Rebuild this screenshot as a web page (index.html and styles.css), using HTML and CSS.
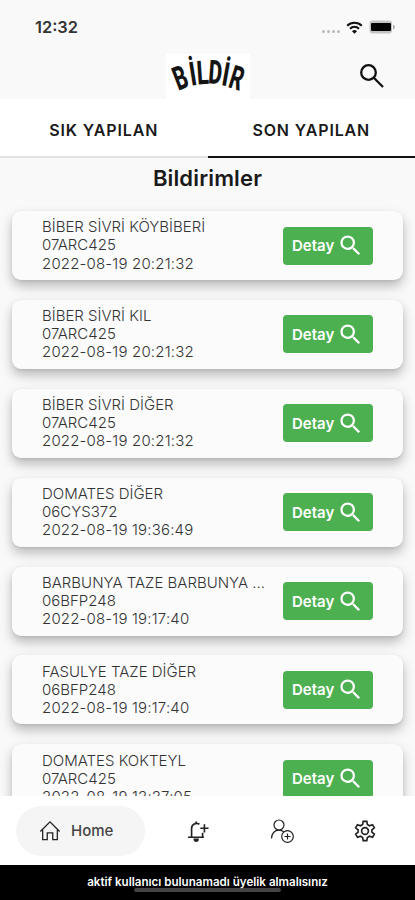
FILE: index.html
```html
<!DOCTYPE html>
<html lang="tr">
<head>
    <meta charset="UTF-8">
    <title>Bildir</title>
    <meta name="viewport" content="width=device-width, initial-scale=1.0">
    <link rel="stylesheet" href="styles.css">
</head>
<body>

<svg width="0" height="0" class="symbols">
    <symbol id="search" viewBox="0 0 24 24">
        <path d="M15.5 14h-.79l-.28-.27A6.47 6.47 0 0 0 16 9.5 6.5 6.5 0 1 0 9.5 16c1.61 0 3.09-.59 4.23-1.57l.27.28v.79l5 4.99L20.49 19l-4.99-5zm-6 0A4.5 4.5 0 1 1 14 9.5 4.5 4.5 0 0 1 9.5 14z"/>
    </symbol>
</svg>

<header class="app-header">
    <div class="status-bar">
        <span class="clock">12:32</span>
        <div class="status-icons">
            <span class="dots"><i></i><i></i><i></i><i></i></span>
            <svg class="wifi" viewBox="0 0 17 13">
                <path d="M1.2 4.7a10.4 10.4 0 0 1 14.6 0M4 7.7a6.4 6.4 0 0 1 9 0" fill="none" stroke="#111" stroke-width="2"/>
                <path d="M8.5 12.7L6 10.2a3.5 3.5 0 0 1 5 0z" fill="#111"/>
            </svg>
            <svg class="battery" viewBox="0 0 27 14">
                <rect x=".5" y=".5" width="22.5" height="13" rx="3" fill="#c4c4c4"/>
                <rect x="2" y="3" width="20" height="8" rx="1" fill="#000"/>
                <path d="M24 4.5c2.5 1 2.5 4 0 5z" fill="#aaa"/>
            </svg>
        </div>
    </div>
    <div class="title-bar">
        <svg class="logo" viewBox="0 0 84 45">
            <g class="logo-letters">
                <text transform="translate(18.5 34.5) rotate(-21) scale(.62 1)">B</text>
                <text transform="translate(28.5 31.3) rotate(-9) scale(.68 1)">İ</text>
                <text transform="translate(37.5 30) rotate(-4) scale(.66 1)">L</text>
                <text transform="translate(48.5 29.8) rotate(4) scale(.64 1)">D</text>
                <text transform="translate(58 31.6) rotate(10) scale(.68 1)">İ</text>
                <text transform="translate(67.5 35) rotate(17) scale(.62 1)">R</text>
            </g>
        </svg>
        <svg class="header-search" viewBox="0 0 24 24"><circle cx="8.5" cy="8.500" r="7.300"/><path d="M13.800 13.800L23 23"/></svg>
    </div>
</header>

<nav class="tabs">
    <a class="tab">SIK YAPILAN</a>
    <a class="tab active">SON YAPILAN</a>
</nav>

<main class="content">
    <h2>Bildirimler</h2>
    <div class="card">
        <div class="info">
            <p>BİBER SİVRİ KÖYBİBERİ</p>
            <p>07ARC425</p>
            <p class="date">2022-08-19 20:21:32</p>
        </div>
        <button class="detail-btn">Detay <svg><use href="#search"/></svg></button>
    </div>
    <div class="card">
        <div class="info">
            <p>BİBER SİVRİ KIL</p>
            <p>07ARC425</p>
            <p class="date">2022-08-19 20:21:32</p>
        </div>
        <button class="detail-btn">Detay <svg><use href="#search"/></svg></button>
    </div>
    <div class="card">
        <div class="info">
            <p>BİBER SİVRİ DİĞER</p>
            <p>07ARC425</p>
            <p class="date">2022-08-19 20:21:32</p>
        </div>
        <button class="detail-btn">Detay <svg><use href="#search"/></svg></button>
    </div>
    <div class="card">
        <div class="info">
            <p>DOMATES DİĞER</p>
            <p>06CYS372</p>
            <p class="date">2022-08-19 19:36:49</p>
        </div>
        <button class="detail-btn">Detay <svg><use href="#search"/></svg></button>
    </div>
    <div class="card">
        <div class="info">
            <p>BARBUNYA TAZE BARBUNYA ...</p>
            <p>06BFP248</p>
            <p class="date">2022-08-19 19:17:40</p>
        </div>
        <button class="detail-btn">Detay <svg><use href="#search"/></svg></button>
    </div>
    <div class="card">
        <div class="info">
            <p>FASULYE TAZE DİĞER</p>
            <p>06BFP248</p>
            <p class="date">2022-08-19 19:17:40</p>
        </div>
        <button class="detail-btn">Detay <svg><use href="#search"/></svg></button>
    </div>
    <div class="card">
        <div class="info">
            <p>DOMATES KOKTEYL</p>
            <p>07ARC425</p>
            <p class="date">2022-08-19 13:37:05</p>
        </div>
        <button class="detail-btn">Detay <svg><use href="#search"/></svg></button>
    </div>
</main>

<nav class="bottom-nav">
    <a class="nav-item home">
        <svg viewBox="0 0 24 24"><path d="M1.500 12.500L12 2l10.500 10.500M4 10.500V21.500h5V14h6v7.500h5V10.500"/></svg>
        <span>Home</span>
    </a>
    <div class="nav-icons">
        <a class="nav-item">
            <svg viewBox="0 0 24 24"><path d="M13.500 4.600A5.500 5.500 0 0 0 5 9.200v9M17 14v4.200M1 18.800h17.500M10 1.500v2.500M14.500 9h9M19 4.500v9"/><path d="M8 21h4a2 2 0 0 1-4 0z" fill="#222"/></svg>
        </a>
        <a class="nav-item">
            <svg viewBox="0 0 24 24" class="thin"><circle cx="9" cy="6" r="5"/><path d="M1.500 19.500c0-5 3-8.300 7.500-8.300 2 0 3.500.6 4.800 1.700M14.500 17.500h6M17.500 14.500v6"/><circle cx="17.500" cy="17.500" r="5.800"/></svg>
        </a>
        <a class="nav-item">
            <svg viewBox="0 0 24 24"><path d="M10 1.500h4l.6 3.500 2.300 1.300 3.300-1.200 2 3.500-2.700 2.200v2.400l2.700 2.200-2 3.500-3.300-1.200-2.300 1.300-.6 3.500h-4l-.6-3.500-2.300-1.300-3.300 1.200-2-3.500 2.700-2.200v-2.400L1.800 8.600l2-3.500 3.300 1.200L9.400 5z"/><circle cx="12" cy="12" r="3.700"/></svg>
        </a>
    </div>
</nav>

<footer class="notice">
    <p>aktif kullanıcı bulunamadı üyelik almalısınız</p>
    <div class="home-indicator"></div>
</footer>

</body>
</html>
```
FILE: styles.css
```css
* {
    box-sizing: border-box;
}

body {
    margin: 0;
    height: 900px;
    display: flex;
    flex-direction: column;
    overflow: hidden;
    font-family: Inter, "Liberation Sans", sans-serif;
    background: #f9f9f9;
    color: #1a1a1a;
}

p {
    margin: 0;
}

.symbols {
    position: absolute;
}

.app-header {
    height: 99px;
    flex: none;
    background: #f9f9f9;
}

.status-bar {
    height: 54px;
    padding: 0 19px 0 35px;
    display: flex;
    justify-content: space-between;
    align-items: center;
}

.clock {
    font-size: 16.4px;
    font-weight: 600;
    color: #333;
}

.status-icons {
    display: flex;
    align-items: center;
}

.dots {
    display: flex;
    gap: 2px;
    margin: 8px 6px 0 0;
}

.dots i {
    width: 3px;
    height: 3px;
    border-radius: 50%;
    background: #bbb;
}

.wifi {
    width: 17px;
    height: 13px;
    margin-right: 6px;
}

.battery {
    width: 27px;
    height: 14px;
}

.title-bar {
    height: 45px;
    padding: 0 31px 0 166px;
    display: flex;
    justify-content: space-between;
    align-items: center;
}

.logo {
    width: 84px;
    height: 45px;
    background: #fff;
    overflow: visible;
}

.logo-letters {
    font-family: Roboto, sans-serif;
    font-size: 33px;
    font-weight: 800;
    text-anchor: middle;
    fill: #151515;
}

.header-search {
    width: 24px;
    height: 24px;
    margin-top: -2px;
    fill: none;
    stroke: #111;
    stroke-width: 2.3;
}

.tabs {
    display: flex;
    height: 59px;
    flex: none;
    background: #fff;
}

.tab {
    flex: 1;
    display: flex;
    justify-content: center;
    align-items: center;
    padding-top: 5px;
    font-size: 16px;
    font-weight: 600;
    letter-spacing: 0.85px;
    border-bottom: 2px solid #e2e2e2;
}

.tab.active {
    border-bottom-color: #111;
}

.content {
    flex: 1;
    min-height: 0;
    overflow: hidden;
    padding: 0 12px;
}

h2 {
    margin: 0 0 12px;
    line-height: 41px;
    font-size: 22px;
    font-weight: 600;
    letter-spacing: 0.15px;
    text-align: center;
}

.card {
    height: 69px;
    margin-bottom: 19.9px;
    padding: 0 30px;
    display: flex;
    justify-content: space-between;
    align-items: center;
    background: #fbfbfb;
    border-radius: 9px;
    box-shadow: 0 6px 12px rgba(0, 0, 0, 0.26), 0 1px 3px rgba(0, 0, 0, 0.08);
}

.info {
    font-size: 15px;
    font-weight: 300;
    line-height: 18.2px;
    color: #333;
    white-space: nowrap;
}

.date {
    letter-spacing: 0.18px;
}

.detail-btn {
    width: 90px;
    height: 38px;
    padding: 0 9px;
    display: flex;
    justify-content: space-between;
    align-items: center;
    border: none;
    border-radius: 4px;
    background: #4caf50;
    color: #fff;
    font-family: inherit;
    font-size: 15px;
    font-weight: 600;
}

.detail-btn svg {
    width: 27px;
    height: 27px;
    fill: #fff;
}

.bottom-nav {
    height: 69px;
    flex: none;
    display: flex;
    align-items: center;
    padding: 0 39px 0 16px;
    background: #fff;
}

.nav-icons {
    flex: 1;
    display: flex;
    justify-content: space-between;
    align-items: center;
    padding-left: 42px;
}

.nav-item svg {
    display: block;
    width: 22px;
    height: 22px;
    fill: none;
    stroke: #222;
    stroke-width: 1.8;
}

.nav-item svg.thin {
    width: 24px;
    height: 24px;
    stroke-width: 1.2;
}

.home {
    width: 129px;
    height: 50px;
    padding-left: 23px;
    display: flex;
    align-items: center;
    gap: 10px;
    border-radius: 25px;
    background: #f5f5f5;
    font-size: 15px;
    font-weight: 500;
    color: #444;
}

.home svg {
    stroke-width: 1.4;
}

.notice {
    height: 35px;
    flex: none;
    padding-top: 9px;
    background: #000;
    color: #fff;
    font-size: 11.6px;
    font-weight: 600;
    line-height: 16px;
    text-align: center;
}

.home-indicator {
    width: 147px;
    height: 4px;
    margin: -2px auto 0;
    border-radius: 2px;
    background: #444;
}
```
